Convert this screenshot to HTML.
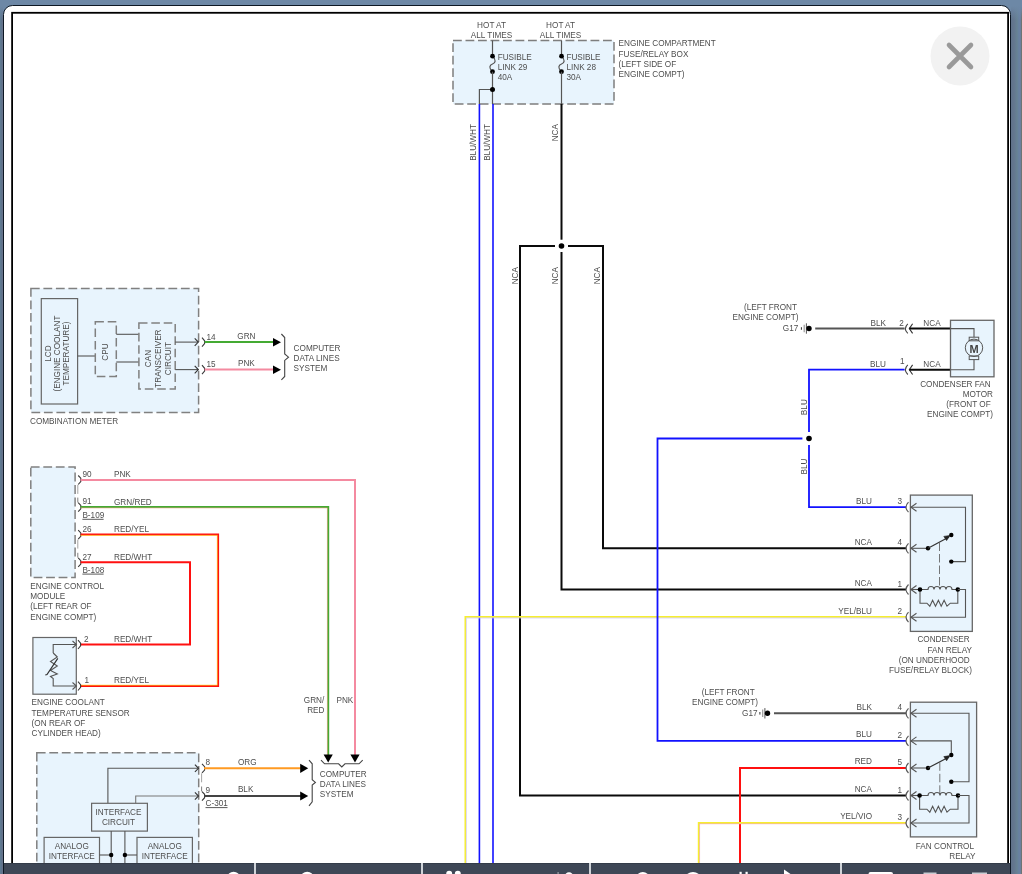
<!DOCTYPE html>
<html><head><meta charset="utf-8">
<style>
html,body{margin:0;padding:0;width:1022px;height:874px;overflow:hidden;background:#6a84a3;}
svg{position:absolute;left:0;top:0;will-change:transform;}
text{font-family:"Liberation Sans",sans-serif;white-space:pre;}
</style></head>
<body>
<svg width="1022" height="874" viewBox="0 0 1022 874">
<defs>
<linearGradient id="rs" x1="0" y1="0" x2="1" y2="0">
<stop offset="0" stop-color="#607189"/><stop offset="0.35" stop-color="#647890"/><stop offset="0.6" stop-color="#678293"/><stop offset="0.8" stop-color="#6781a3"/><stop offset="1" stop-color="#6f7f9c"/>
</linearGradient>
<linearGradient id="tf" x1="0" y1="0" x2="0" y2="1"><stop offset="0" stop-color="#6d88a6" stop-opacity="1"/><stop offset="0.3" stop-color="#6d88a6" stop-opacity="1"/><stop offset="1" stop-color="#6d88a6" stop-opacity="0"/></linearGradient>
</defs>
<rect x="0" y="0" width="1022" height="874" fill="#6d88a6"/>
<rect x="0" y="0" width="1" height="874" fill="#5f7a92"/>
<rect x="1" y="0" width="1" height="874" fill="#5e748d"/>
<rect x="2" y="0" width="1" height="874" fill="#66738b"/>
<rect x="1011" y="0" width="10" height="874" fill="url(#rs)"/>
<rect x="1021" y="0" width="1" height="874" fill="#6e7473"/>
<rect x="0" y="0" width="3" height="20" fill="url(#tf)"/>
<rect x="1011" y="0" width="11" height="20" fill="url(#tf)"/>
<rect x="3.5" y="5.5" width="1007" height="900" rx="9" fill="#ffffff" stroke="#0d1824" stroke-width="1"/>
<rect x="12.1" y="12.8" width="996" height="900" fill="none" stroke="#000" stroke-width="1.8"/>
<g>
<rect x="453" y="40.5" width="161" height="63.5" fill="#e8f4fd" stroke="#7e7e7e" stroke-width="1.5" stroke-dasharray="8.8,3.7"/>
<text x="491.50" y="28.12" text-anchor="middle" font-size="8.2" fill="#4e4e4e">HOT AT</text>
<text x="491.50" y="37.92" text-anchor="middle" font-size="8.2" fill="#4e4e4e">ALL TIMES</text>
<line x1="492.5" y1="40.5" x2="492.5" y2="56" stroke="#555555" stroke-width="1.2"/>
<path d="M492.5,56 C496.5,60 495.5,63 492.5,64 C489.5,65 488.5,68 492.5,71.7" fill="none" stroke="#555555" stroke-width="1.2"/>
<circle cx="492.5" cy="56.2" r="2.4" fill="#000"/>
<circle cx="492.5" cy="71.7" r="2.4" fill="#000"/>
<text x="497.70" y="59.72" text-anchor="start" font-size="8.2" fill="#4e4e4e">FUSIBLE</text>
<text x="497.70" y="70.02" text-anchor="start" font-size="8.2" fill="#4e4e4e">LINK 29</text>
<text x="497.70" y="80.22" text-anchor="start" font-size="8.2" fill="#4e4e4e">40A</text>
<text x="560.50" y="28.12" text-anchor="middle" font-size="8.2" fill="#4e4e4e">HOT AT</text>
<text x="560.50" y="37.92" text-anchor="middle" font-size="8.2" fill="#4e4e4e">ALL TIMES</text>
<line x1="561.5" y1="40.5" x2="561.5" y2="56" stroke="#555555" stroke-width="1.2"/>
<path d="M561.5,56 C565.5,60 564.5,63 561.5,64 C558.5,65 557.5,68 561.5,71.7" fill="none" stroke="#555555" stroke-width="1.2"/>
<circle cx="561.5" cy="56.2" r="2.4" fill="#000"/>
<circle cx="561.5" cy="71.7" r="2.4" fill="#000"/>
<text x="566.40" y="59.72" text-anchor="start" font-size="8.2" fill="#4e4e4e">FUSIBLE</text>
<text x="566.40" y="70.02" text-anchor="start" font-size="8.2" fill="#4e4e4e">LINK 28</text>
<text x="566.40" y="80.22" text-anchor="start" font-size="8.2" fill="#4e4e4e">30A</text>
<line x1="492.5" y1="71.7" x2="492.5" y2="104" stroke="#555555" stroke-width="1.2"/>
<polyline points="492.5,89.5 479.4,89.5 479.4,104" fill="none" stroke="#555555" stroke-width="1.2" stroke-linejoin="miter"/>
<circle cx="492.5" cy="89.5" r="2.5" fill="#000"/>
<line x1="561.5" y1="71.7" x2="561.5" y2="104" stroke="#555555" stroke-width="1.2"/>
<text x="618.60" y="45.62" text-anchor="start" font-size="8.2" fill="#4e4e4e">ENGINE COMPARTMENT</text>
<text x="618.60" y="56.82" text-anchor="start" font-size="8.2" fill="#4e4e4e">FUSE/RELAY BOX</text>
<text x="618.60" y="67.02" text-anchor="start" font-size="8.2" fill="#4e4e4e">(LEFT SIDE OF</text>
<text x="618.60" y="76.82" text-anchor="start" font-size="8.2" fill="#4e4e4e">ENGINE COMPT)</text>
<line x1="479.4" y1="104" x2="479.4" y2="863" stroke="#1212ff" stroke-width="1.6"/>
<line x1="493" y1="104" x2="493" y2="863" stroke="#1212ff" stroke-width="1.6"/>
<text transform="translate(476.20,124.00) rotate(-90)" text-anchor="end" font-size="8.2" fill="#4e4e4e">BLU/WHT</text>
<text transform="translate(490.00,124.00) rotate(-90)" text-anchor="end" font-size="8.2" fill="#4e4e4e">BLU/WHT</text>
<line x1="561.5" y1="104" x2="561.5" y2="239.7" stroke="#0a0a0a" stroke-width="2"/>
<text transform="translate(558.20,124.00) rotate(-90)" text-anchor="end" font-size="8.2" fill="#4e4e4e">NCA</text>
<line x1="520" y1="246" x2="555" y2="246" stroke="#0a0a0a" stroke-width="2"/>
<line x1="568" y1="246" x2="603" y2="246" stroke="#0a0a0a" stroke-width="2"/>
<circle cx="561.5" cy="246" r="2.8" fill="#000"/>
<polyline points="520,245 520,795.5 906,795.5" fill="none" stroke="#0a0a0a" stroke-width="2" stroke-linejoin="miter"/>
<polyline points="561.5,252 561.5,589.5 906,589.5" fill="none" stroke="#0a0a0a" stroke-width="2" stroke-linejoin="miter"/>
<polyline points="603,245 603,548.3 906,548.3" fill="none" stroke="#0a0a0a" stroke-width="2" stroke-linejoin="miter"/>
<text transform="translate(518.40,267.00) rotate(-90)" text-anchor="end" font-size="8.2" fill="#4e4e4e">NCA</text>
<text transform="translate(558.20,267.00) rotate(-90)" text-anchor="end" font-size="8.2" fill="#4e4e4e">NCA</text>
<text transform="translate(600.00,267.00) rotate(-90)" text-anchor="end" font-size="8.2" fill="#4e4e4e">NCA</text>
<polyline points="465.3,863 465.3,616.9 906,616.9" fill="none" stroke="#f6ee30" stroke-width="1.6" stroke-linejoin="miter"/>
<polyline points="466.4,863 466.4,618.0 906,618.0" fill="none" stroke="#cdc6f6" stroke-width="0.7" stroke-linejoin="miter"/>
<polyline points="802.4,438.5 657.5,438.5 657.5,740.9 906,740.9" fill="none" stroke="#1212ff" stroke-width="1.8" stroke-linejoin="miter"/>
<polyline points="904.6,369.7 809,369.7 809,432" fill="none" stroke="#1212ff" stroke-width="1.8" stroke-linejoin="miter"/>
<polyline points="809,445 809,507.2 906,507.2" fill="none" stroke="#1212ff" stroke-width="1.8" stroke-linejoin="miter"/>
<circle cx="809" cy="438.5" r="2.8" fill="#000"/>
<text transform="translate(807.00,399.20) rotate(-90)" text-anchor="end" font-size="8.2" fill="#4e4e4e">BLU</text>
<text transform="translate(807.00,458.50) rotate(-90)" text-anchor="end" font-size="8.2" fill="#4e4e4e">BLU</text>
<polyline points="740,863 740,768 906,768" fill="none" stroke="#ff1010" stroke-width="2" stroke-linejoin="miter"/>
<polyline points="698.8,863 698.8,823 906,823" fill="none" stroke="#f6ee30" stroke-width="2" stroke-linejoin="miter"/>
<polyline points="699.6,863 699.6,823.8 906,823.8" fill="none" stroke="#f0a0d0" stroke-width="0.6" stroke-linejoin="miter"/>
<text x="797.00" y="310.12" text-anchor="end" font-size="8.2" fill="#4e4e4e">(LEFT FRONT</text>
<text x="798.40" y="320.02" text-anchor="end" font-size="8.2" fill="#4e4e4e">ENGINE COMPT)</text>
<text x="798.30" y="331.12" text-anchor="end" font-size="8.2" fill="#4e4e4e">G17</text>
<line x1="801.4" y1="327.2" x2="801.4" y2="329.8" stroke="#333" stroke-width="1"/>
<line x1="804.2" y1="324.7" x2="804.2" y2="332.3" stroke="#9a9a9a" stroke-width="1.2"/>
<line x1="806.4" y1="323.3" x2="806.4" y2="333.7" stroke="#555" stroke-width="1"/>
<circle cx="809" cy="328.5" r="2.7" fill="#000"/>
<line x1="815.2" y1="328.6" x2="904.6" y2="328.6" stroke="#555" stroke-width="2"/>
<text x="886.00" y="326.02" text-anchor="end" font-size="8.2" fill="#4e4e4e">BLK</text>
<text x="901.60" y="325.62" text-anchor="middle" font-size="8.2" fill="#4e4e4e">2</text>
<text x="902.30" y="364.12" text-anchor="middle" font-size="8.2" fill="#4e4e4e">1</text>
<text x="886.00" y="367.02" text-anchor="end" font-size="8.2" fill="#4e4e4e">BLU</text>
<path d="M907.8,323.8 Q903.0,328.6 907.8,333.40000000000003" fill="none" stroke="#444" stroke-width="1.1"/>
<polyline points="912.6,323.8 909.3,328.6 912.6,333.40000000000003" fill="none" stroke="#333" stroke-width="1.1" stroke-linejoin="miter"/>
<path d="M907.8,364.9 Q903.0,369.7 907.8,374.5" fill="none" stroke="#444" stroke-width="1.1"/>
<polyline points="912.6,364.9 909.3,369.7 912.6,374.5" fill="none" stroke="#333" stroke-width="1.1" stroke-linejoin="miter"/>
<line x1="909.5" y1="328.6" x2="950.5" y2="328.6" stroke="#0a0a0a" stroke-width="2"/>
<line x1="909.5" y1="369.7" x2="950.5" y2="369.7" stroke="#0a0a0a" stroke-width="2"/>
<text x="932.00" y="326.02" text-anchor="middle" font-size="8.2" fill="#4e4e4e">NCA</text>
<text x="932.00" y="367.02" text-anchor="middle" font-size="8.2" fill="#4e4e4e">NCA</text>
<rect x="950.5" y="320.3" width="43.5" height="56.5" fill="#e8f4fd" stroke="#666" stroke-width="1.3"/>
<polyline points="950.5,328.6 974,328.6 974,337.2" fill="none" stroke="#555555" stroke-width="1.1" stroke-linejoin="miter"/>
<polyline points="950.5,369.7 974,369.7 974,359.6" fill="none" stroke="#555555" stroke-width="1.1" stroke-linejoin="miter"/>
<rect x="969.2" y="337.2" width="9.5" height="3.6" fill="#e8f4fd" stroke="#555555" stroke-width="1"/>
<rect x="969.2" y="356.0" width="9.5" height="3.6" fill="#e8f4fd" stroke="#555555" stroke-width="1"/>
<circle cx="974" cy="347.8" r="8.7" fill="none" stroke="#555555" stroke-width="1"/>
<text x="974.00" y="352.88" text-anchor="middle" font-size="11" fill="#444" font-weight="bold">M</text>
<text x="993.00" y="387.12" text-anchor="end" font-size="8.2" fill="#4e4e4e">CONDENSER FAN </text>
<text x="993.00" y="397.22" text-anchor="end" font-size="8.2" fill="#4e4e4e">MOTOR</text>
<text x="993.00" y="407.32" text-anchor="end" font-size="8.2" fill="#4e4e4e">(FRONT OF </text>
<text x="993.00" y="417.42" text-anchor="end" font-size="8.2" fill="#4e4e4e">ENGINE COMPT)</text>
<rect x="910.4" y="495.1" width="61.9" height="136.3" fill="#e8f4fd" stroke="#666" stroke-width="1.3"/>
<path d="M908.5,502.2 Q903.5,507.2 908.5,512.2" fill="none" stroke="#5a5a5a" stroke-width="1.2"/>
<polyline points="916.5,503.2 910.9,507.2 916.5,511.2" fill="none" stroke="#555555" stroke-width="1.1" stroke-linejoin="miter"/>
<text x="899.70" y="504.22" text-anchor="middle" font-size="8.2" fill="#4e4e4e">3</text>
<text x="872.00" y="503.52" text-anchor="end" font-size="8.2" fill="#4e4e4e">BLU</text>
<path d="M908.5,543.3 Q903.5,548.3 908.5,553.3" fill="none" stroke="#5a5a5a" stroke-width="1.2"/>
<polyline points="916.5,544.3 910.9,548.3 916.5,552.3" fill="none" stroke="#555555" stroke-width="1.1" stroke-linejoin="miter"/>
<text x="899.70" y="545.32" text-anchor="middle" font-size="8.2" fill="#4e4e4e">4</text>
<text x="872.00" y="544.62" text-anchor="end" font-size="8.2" fill="#4e4e4e">NCA</text>
<path d="M908.5,584.5 Q903.5,589.5 908.5,594.5" fill="none" stroke="#5a5a5a" stroke-width="1.2"/>
<polyline points="916.5,585.5 910.9,589.5 916.5,593.5" fill="none" stroke="#555555" stroke-width="1.1" stroke-linejoin="miter"/>
<text x="899.70" y="586.52" text-anchor="middle" font-size="8.2" fill="#4e4e4e">1</text>
<text x="872.00" y="585.82" text-anchor="end" font-size="8.2" fill="#4e4e4e">NCA</text>
<path d="M908.5,612.2 Q903.5,617.2 908.5,622.2" fill="none" stroke="#5a5a5a" stroke-width="1.2"/>
<polyline points="916.5,613.2 910.9,617.2 916.5,621.2" fill="none" stroke="#555555" stroke-width="1.1" stroke-linejoin="miter"/>
<text x="899.70" y="614.22" text-anchor="middle" font-size="8.2" fill="#4e4e4e">2</text>
<text x="872.00" y="613.52" text-anchor="end" font-size="8.2" fill="#4e4e4e">YEL/BLU</text>
<polyline points="911,507.2 965.5,507.2 965.5,561.6 951.3,561.6" fill="none" stroke="#555555" stroke-width="1.1" stroke-linejoin="miter"/>
<circle cx="951.3" cy="561.6" r="2.2" fill="#000"/>
<line x1="911" y1="548.3" x2="928" y2="548.3" stroke="#555555" stroke-width="1.1"/>
<circle cx="928" cy="548.3" r="2.2" fill="#000"/>
<line x1="928" y1="548.3" x2="949" y2="537" stroke="#333" stroke-width="1.2"/>
<path d="M943.8,536.4 L950,535.4 L946.6,540.6 Z" fill="#222" stroke="#222" stroke-width="0.6"/>
<circle cx="951.3" cy="535" r="2.2" fill="#000"/>
<line x1="939.5" y1="542.5" x2="939.5" y2="589" stroke="#555555" stroke-width="0.8" stroke-dasharray="8.5,3"/>
<line x1="911" y1="589.5" x2="920" y2="589.5" stroke="#555555" stroke-width="1.1"/>
<path d="M920,589.5 L928,589.5 a3,3 0 0 1 6,0 a3,3 0 0 1 6,0 a3,3 0 0 1 6,0 a3,3 0 0 1 6,0 L957.8,589.5" fill="none" stroke="#555555" stroke-width="1.1"/>
<polyline points="920,589.5 920,603.2 926.9,603.2 929.8,606.2 932.6,600.2 935.5,606.2 938.4,600.2 941.2,606.2 944.1,600.2 947.0,606.2 950.3,603.2 957.8,603.2 957.8,589.5" fill="none" stroke="#555555" stroke-width="1.1" stroke-linejoin="miter"/>
<circle cx="920" cy="589.5" r="2.3" fill="#000"/>
<circle cx="957.8" cy="589.5" r="2.3" fill="#000"/>
<polyline points="957.8,589.5 965.5,589.5 965.5,617.2 911,617.2" fill="none" stroke="#555555" stroke-width="1.1" stroke-linejoin="miter"/>
<text x="972.00" y="642.32" text-anchor="end" font-size="8.2" fill="#4e4e4e">CONDENSER </text>
<text x="972.00" y="652.62" text-anchor="end" font-size="8.2" fill="#4e4e4e">FAN RELAY</text>
<text x="972.00" y="662.92" text-anchor="end" font-size="8.2" fill="#4e4e4e">(ON UNDERHOOD </text>
<text x="972.00" y="673.22" text-anchor="end" font-size="8.2" fill="#4e4e4e">FUSE/RELAY BLOCK)</text>
<text x="754.80" y="695.12" text-anchor="end" font-size="8.2" fill="#4e4e4e">(LEFT FRONT</text>
<text x="758.00" y="705.02" text-anchor="end" font-size="8.2" fill="#4e4e4e">ENGINE COMPT)</text>
<text x="757.50" y="716.12" text-anchor="end" font-size="8.2" fill="#4e4e4e">G17</text>
<line x1="759.9" y1="712.0" x2="759.9" y2="714.5999999999999" stroke="#333" stroke-width="1"/>
<line x1="762.7" y1="709.5" x2="762.7" y2="717.0999999999999" stroke="#9a9a9a" stroke-width="1.2"/>
<line x1="764.9" y1="708.0999999999999" x2="764.9" y2="718.5" stroke="#555" stroke-width="1"/>
<circle cx="767.5" cy="713.3" r="2.7" fill="#000"/>
<line x1="774" y1="713.3" x2="906" y2="713.3" stroke="#555" stroke-width="2"/>
<rect x="910.4" y="702.2" width="66.2" height="134.7" fill="#e8f4fd" stroke="#666" stroke-width="1.3"/>
<path d="M908.5,708.3 Q903.5,713.3 908.5,718.3" fill="none" stroke="#5a5a5a" stroke-width="1.2"/>
<polyline points="916.5,709.3 910.9,713.3 916.5,717.3" fill="none" stroke="#555555" stroke-width="1.1" stroke-linejoin="miter"/>
<text x="899.70" y="710.32" text-anchor="middle" font-size="8.2" fill="#4e4e4e">4</text>
<text x="872.00" y="709.62" text-anchor="end" font-size="8.2" fill="#4e4e4e">BLK</text>
<path d="M908.5,735.9 Q903.5,740.9 908.5,745.9" fill="none" stroke="#5a5a5a" stroke-width="1.2"/>
<polyline points="916.5,736.9 910.9,740.9 916.5,744.9" fill="none" stroke="#555555" stroke-width="1.1" stroke-linejoin="miter"/>
<text x="899.70" y="737.92" text-anchor="middle" font-size="8.2" fill="#4e4e4e">2</text>
<text x="872.00" y="737.22" text-anchor="end" font-size="8.2" fill="#4e4e4e">BLU</text>
<path d="M908.5,763 Q903.5,768 908.5,773" fill="none" stroke="#5a5a5a" stroke-width="1.2"/>
<polyline points="916.5,764 910.9,768 916.5,772" fill="none" stroke="#555555" stroke-width="1.1" stroke-linejoin="miter"/>
<text x="899.70" y="765.02" text-anchor="middle" font-size="8.2" fill="#4e4e4e">5</text>
<text x="872.00" y="764.32" text-anchor="end" font-size="8.2" fill="#4e4e4e">RED</text>
<path d="M908.5,790.5 Q903.5,795.5 908.5,800.5" fill="none" stroke="#5a5a5a" stroke-width="1.2"/>
<polyline points="916.5,791.5 910.9,795.5 916.5,799.5" fill="none" stroke="#555555" stroke-width="1.1" stroke-linejoin="miter"/>
<text x="899.70" y="792.52" text-anchor="middle" font-size="8.2" fill="#4e4e4e">1</text>
<text x="872.00" y="791.82" text-anchor="end" font-size="8.2" fill="#4e4e4e">NCA</text>
<path d="M908.5,818 Q903.5,823 908.5,828" fill="none" stroke="#5a5a5a" stroke-width="1.2"/>
<polyline points="916.5,819 910.9,823 916.5,827" fill="none" stroke="#555555" stroke-width="1.1" stroke-linejoin="miter"/>
<text x="899.70" y="820.02" text-anchor="middle" font-size="8.2" fill="#4e4e4e">3</text>
<text x="872.00" y="819.32" text-anchor="end" font-size="8.2" fill="#4e4e4e">YEL/VIO</text>
<polyline points="911,713.3 969,713.3 969,781.8 951.3,781.8" fill="none" stroke="#555555" stroke-width="1.1" stroke-linejoin="miter"/>
<circle cx="951.3" cy="781.8" r="2.2" fill="#000"/>
<polyline points="911,740.9 951.3,740.9 951.3,755" fill="none" stroke="#555555" stroke-width="1.1" stroke-linejoin="miter"/>
<circle cx="951.3" cy="755" r="2.2" fill="#000"/>
<line x1="911" y1="768" x2="928" y2="768" stroke="#555555" stroke-width="1.1"/>
<circle cx="928" cy="768" r="2.2" fill="#000"/>
<line x1="928" y1="768" x2="949" y2="757" stroke="#333" stroke-width="1.2"/>
<path d="M943.8,756.6 L950,755.6 L946.6,760.8 Z" fill="#222" stroke="#222" stroke-width="0.6"/>
<line x1="939.8" y1="762.3" x2="939.8" y2="795" stroke="#555555" stroke-width="0.8" stroke-dasharray="8.5,3"/>
<line x1="911" y1="795.5" x2="920" y2="795.5" stroke="#555555" stroke-width="1.1"/>
<path d="M919.6,795.5 L928,795.5 a3,3 0 0 1 6,0 a3,3 0 0 1 6,0 a3,3 0 0 1 6,0 a3,3 0 0 1 6,0 L958,795.5" fill="none" stroke="#555555" stroke-width="1.1"/>
<polyline points="919.6,795.5 919.6,809.2 926.9,809.2 929.8,812.2 932.6,806.2 935.5,812.2 938.4,806.2 941.2,812.2 944.1,806.2 947.0,812.2 950.3,809.2 958,809.2 958,795.5" fill="none" stroke="#555555" stroke-width="1.1" stroke-linejoin="miter"/>
<circle cx="919.6" cy="795.5" r="2.3" fill="#000"/>
<circle cx="958" cy="795.5" r="2.3" fill="#000"/>
<polyline points="958,795.5 969,795.5 969,823 911,823" fill="none" stroke="#555555" stroke-width="1.1" stroke-linejoin="miter"/>
<text x="974.00" y="848.82" text-anchor="end" font-size="8.2" fill="#4e4e4e">FAN CONTROL</text>
<text x="975.50" y="859.12" text-anchor="end" font-size="8.2" fill="#4e4e4e">RELAY</text>
<rect x="30.9" y="288.5" width="167.7" height="123.9" fill="#e8f4fd" stroke="#808080" stroke-width="1.5" stroke-dasharray="8.8,3.7"/>
<rect x="41.3" y="298.6" width="36.3" height="105.4" fill="#e8f4fd" stroke="#666" stroke-width="1.2"/>
<text transform="translate(50.50,353.60) rotate(-90)" text-anchor="middle" font-size="8.2" fill="#4e4e4e">LCD</text>
<text transform="translate(59.70,353.60) rotate(-90)" text-anchor="middle" font-size="8.2" fill="#4e4e4e">(ENGINE COOLANT</text>
<text transform="translate(69.00,353.60) rotate(-90)" text-anchor="middle" font-size="8.2" fill="#4e4e4e">TEMPERATURE)</text>
<line x1="77.6" y1="356" x2="95.3" y2="356" stroke="#555555" stroke-width="1.1"/>
<rect x="95.3" y="321.7" width="21" height="54.9" fill="#e8f4fd" stroke="#808080" stroke-width="1.5" stroke-dasharray="8.6,3.8"/>
<text transform="translate(107.60,352.00) rotate(-90)" text-anchor="middle" font-size="8.2" fill="#4e4e4e">CPU</text>
<polyline points="116.3,334.3 138.9,334.3" fill="none" stroke="#555555" stroke-width="1.1" stroke-linejoin="miter"/>
<polyline points="116.3,362 138.9,362" fill="none" stroke="#555555" stroke-width="1.1" stroke-linejoin="miter"/>
<rect x="138.9" y="323" width="36.3" height="65.9" fill="#e8f4fd" stroke="#808080" stroke-width="1.5" stroke-dasharray="8.6,3.8"/>
<text transform="translate(150.60,358.60) rotate(-90)" text-anchor="middle" font-size="8.2" fill="#4e4e4e">CAN</text>
<text transform="translate(161.00,358.60) rotate(-90)" text-anchor="middle" font-size="8.2" fill="#4e4e4e">TRANSCEIVER</text>
<text transform="translate(170.80,358.60) rotate(-90)" text-anchor="middle" font-size="8.2" fill="#4e4e4e">CIRCUIT</text>
<text x="30.00" y="424.02" text-anchor="start" font-size="8.2" fill="#4e4e4e">COMBINATION METER</text>
<line x1="175.2" y1="342.1" x2="198.3" y2="342.1" stroke="#555555" stroke-width="1.1"/>
<polyline points="194.70000000000002,338.3 198.3,342.1 194.70000000000002,345.90000000000003" fill="none" stroke="#333" stroke-width="1.1" stroke-linejoin="miter"/>
<line x1="175.2" y1="369.6" x2="198.3" y2="369.6" stroke="#555555" stroke-width="1.1"/>
<polyline points="194.70000000000002,365.8 198.3,369.6 194.70000000000002,373.40000000000003" fill="none" stroke="#333" stroke-width="1.1" stroke-linejoin="miter"/>
<polyline points="202,337.70000000000005 204.6,340.8 204.6,343.5 202,346.6" fill="none" stroke="#3a3a3a" stroke-width="1.1" stroke-linejoin="miter"/>
<polyline points="202,365.20000000000005 204.6,368.3 204.6,371.0 202,374.1" fill="none" stroke="#3a3a3a" stroke-width="1.1" stroke-linejoin="miter"/>
<line x1="204.6" y1="342.1" x2="273.5" y2="342.1" stroke="#44aa33" stroke-width="2"/>
<line x1="204.6" y1="369.6" x2="273.5" y2="369.6" stroke="#f48aa0" stroke-width="2"/>
<path d="M273,337.9 L281,342.2 L273,346.5 Z" fill="#000"/>
<path d="M273,365.5 L281,369.8 L273,374.1 Z" fill="#000"/>
<text x="206.40" y="339.82" text-anchor="start" font-size="8.2" fill="#4e4e4e">14</text>
<text x="206.40" y="367.02" text-anchor="start" font-size="8.2" fill="#4e4e4e">15</text>
<text x="246.40" y="339.02" text-anchor="middle" font-size="8.2" fill="#4e4e4e">GRN</text>
<text x="246.40" y="366.22" text-anchor="middle" font-size="8.2" fill="#4e4e4e">PNK</text>
<polyline points="281.4,334 284.7,337.5 284.7,354 288.5,357.2 284.7,360.4 284.7,376.5 281.4,379.8" fill="none" stroke="#444" stroke-width="1.1" stroke-linejoin="miter"/>
<text x="293.60" y="350.72" text-anchor="start" font-size="8.2" fill="#4e4e4e">COMPUTER</text>
<text x="293.60" y="360.82" text-anchor="start" font-size="8.2" fill="#4e4e4e">DATA LINES</text>
<text x="293.60" y="370.92" text-anchor="start" font-size="8.2" fill="#4e4e4e">SYSTEM</text>
<rect x="30.8" y="466.9" width="44.3" height="110.5" fill="#e8f4fd" stroke="#808080" stroke-width="1.5" stroke-dasharray="8.8,3.7"/>
<polyline points="78.2,475.5 80.8,478.2 80.8,481.59999999999997 78.2,484.5" fill="none" stroke="#3a3a3a" stroke-width="1.1" stroke-linejoin="miter"/>
<polyline points="78.2,502.70000000000005 80.8,505.40000000000003 80.8,508.8 78.2,511.70000000000005" fill="none" stroke="#3a3a3a" stroke-width="1.1" stroke-linejoin="miter"/>
<line x1="77.8" y1="484.9" x2="77.8" y2="493.9" stroke="#9a9a9a" stroke-width="0.9"/>
<line x1="77.8" y1="497.6" x2="77.8" y2="502.5" stroke="#707070" stroke-width="0.9"/>
<polyline points="78.2,530.2 80.8,532.9 80.8,536.3000000000001 78.2,539.2" fill="none" stroke="#3a3a3a" stroke-width="1.1" stroke-linejoin="miter"/>
<polyline points="78.2,557.9 80.8,560.5999999999999 80.8,564.0 78.2,566.9" fill="none" stroke="#3a3a3a" stroke-width="1.1" stroke-linejoin="miter"/>
<line x1="77.8" y1="539.6" x2="77.8" y2="548.6" stroke="#9a9a9a" stroke-width="0.9"/>
<line x1="77.8" y1="552.8" x2="77.8" y2="557.6999999999999" stroke="#707070" stroke-width="0.9"/>
<polyline points="80.6,479.9 355,479.9 355,757" fill="none" stroke="#f48aa0" stroke-width="2" stroke-linejoin="miter"/>
<polyline points="80.6,507.1 328.2,507.1 328.2,757" fill="none" stroke="#44aa33" stroke-width="2" stroke-linejoin="miter"/>
<polyline points="80.6,507.9 327.4,507.9 327.4,757" fill="none" stroke="#e8a080" stroke-width="0.6" stroke-linejoin="miter"/>
<polyline points="80.6,534.6 218.1,534.6 218.1,686 80.6,686" fill="none" stroke="#ff1010" stroke-width="2" stroke-linejoin="miter"/>
<polyline points="80.6,535.4 217.3,535.4 217.3,685.2 80.6,685.2" fill="none" stroke="#ffd020" stroke-width="0.7" stroke-linejoin="miter"/>
<polyline points="80.6,562.3 190,562.3 190,644.5 80.6,644.5" fill="none" stroke="#ff1010" stroke-width="2" stroke-linejoin="miter"/>
<text x="82.40" y="477.22" text-anchor="start" font-size="8.2" fill="#4e4e4e">90</text>
<text x="114.00" y="477.42" text-anchor="start" font-size="8.2" fill="#4e4e4e">PNK</text>
<text x="82.40" y="504.42" text-anchor="start" font-size="8.2" fill="#4e4e4e">91</text>
<text x="114.00" y="504.62" text-anchor="start" font-size="8.2" fill="#4e4e4e">GRN/RED</text>
<text x="82.40" y="531.92" text-anchor="start" font-size="8.2" fill="#4e4e4e">26</text>
<text x="114.00" y="532.12" text-anchor="start" font-size="8.2" fill="#4e4e4e">RED/YEL</text>
<text x="82.40" y="559.62" text-anchor="start" font-size="8.2" fill="#4e4e4e">27</text>
<text x="114.00" y="559.82" text-anchor="start" font-size="8.2" fill="#4e4e4e">RED/WHT</text>
<text x="82.40" y="517.82" text-anchor="start" font-size="8.2" fill="#4e4e4e">B-109</text>
<line x1="82.4" y1="519.3" x2="103.6" y2="519.3" stroke="#5a5a5a" stroke-width="1"/>
<text x="82.40" y="572.62" text-anchor="start" font-size="8.2" fill="#4e4e4e">B-108</text>
<line x1="82.4" y1="574.0999999999999" x2="103.6" y2="574.0999999999999" stroke="#5a5a5a" stroke-width="1"/>
<text x="30.30" y="589.02" text-anchor="start" font-size="8.2" fill="#4e4e4e">ENGINE CONTROL</text>
<text x="30.30" y="598.82" text-anchor="start" font-size="8.2" fill="#4e4e4e">MODULE</text>
<text x="30.30" y="609.02" text-anchor="start" font-size="8.2" fill="#4e4e4e">(LEFT REAR OF</text>
<text x="30.30" y="619.62" text-anchor="start" font-size="8.2" fill="#4e4e4e">ENGINE COMPT)</text>
<rect x="32.9" y="637.5" width="43.4" height="56.7" fill="#e8f4fd" stroke="#666" stroke-width="1.2"/>
<polyline points="78,640.1 80.6,643.2 80.6,645.9 78,649.0" fill="none" stroke="#3a3a3a" stroke-width="1.1" stroke-linejoin="miter"/>
<polyline points="78,681.6 80.6,684.7 80.6,687.4 78,690.5" fill="none" stroke="#3a3a3a" stroke-width="1.1" stroke-linejoin="miter"/>
<text x="84.00" y="642.32" text-anchor="start" font-size="8.2" fill="#4e4e4e">2</text>
<text x="84.60" y="683.22" text-anchor="start" font-size="8.2" fill="#4e4e4e">1</text>
<text x="114.00" y="642.12" text-anchor="start" font-size="8.2" fill="#4e4e4e">RED/WHT</text>
<text x="114.00" y="683.42" text-anchor="start" font-size="8.2" fill="#4e4e4e">RED/YEL</text>
<polyline points="76,644.5 53.2,644.5 53.2,653" fill="none" stroke="#555555" stroke-width="1.1" stroke-linejoin="miter"/>
<polyline points="72.5,641 76.4,644.5 72.5,648" fill="none" stroke="#555555" stroke-width="1.1" stroke-linejoin="miter"/>
<polyline points="53.2,653 57.3,657 50.5,661.5 57.3,666 50.5,670.5 57.3,674 50.5,676.5 53.2,678.5 53.2,686 76,686" fill="none" stroke="#555555" stroke-width="1.1" stroke-linejoin="miter"/>
<polyline points="72.5,682.5 76.4,686 72.5,689.5" fill="none" stroke="#555555" stroke-width="1.1" stroke-linejoin="miter"/>
<polyline points="45.3,675 47,674.5 57.8,658.4" fill="none" stroke="#333" stroke-width="1.2" stroke-linejoin="miter"/>
<text x="31.60" y="705.02" text-anchor="start" font-size="8.2" fill="#4e4e4e">ENGINE COOLANT</text>
<text x="31.60" y="715.82" text-anchor="start" font-size="8.2" fill="#4e4e4e">TEMPERATURE SENSOR</text>
<text x="31.60" y="725.82" text-anchor="start" font-size="8.2" fill="#4e4e4e">(ON REAR OF</text>
<text x="31.60" y="735.82" text-anchor="start" font-size="8.2" fill="#4e4e4e">CYLINDER HEAD)</text>
<path d="M323.6,754.6 L332.8,754.6 L328.2,762.6 Z" fill="#000"/>
<path d="M350.4,754.6 L359.6,754.6 L355,762.6 Z" fill="#000"/>
<text x="324.30" y="703.12" text-anchor="end" font-size="8.2" fill="#4e4e4e">GRN/</text>
<text x="324.50" y="713.12" text-anchor="end" font-size="8.2" fill="#4e4e4e">RED</text>
<text x="336.50" y="703.12" text-anchor="start" font-size="8.2" fill="#4e4e4e">PNK</text>
<polyline points="321,760.2 324.6,763.8 338.6,763.8 341.8,767 345,763.8 359,763.8 362.7,760.2" fill="none" stroke="#444" stroke-width="1.1" stroke-linejoin="miter"/>
<rect x="36.8" y="752.8" width="161.9" height="130" fill="#e8f4fd" stroke="#808080" stroke-width="1.5" stroke-dasharray="8.8,3.7"/>
<polyline points="107.9,803.3 107.9,768.3 198.5,768.3" fill="none" stroke="#555555" stroke-width="1.1" stroke-linejoin="miter"/>
<polyline points="194.9,764.7 198.5,768.3 194.9,771.9" fill="none" stroke="#333" stroke-width="1.1" stroke-linejoin="miter"/>
<polyline points="135.7,803.3 135.7,796 198.5,796" fill="none" stroke="#777" stroke-width="1.1" stroke-linejoin="miter"/>
<polyline points="194.9,792.4 198.5,796 194.9,799.6" fill="none" stroke="#333" stroke-width="1.1" stroke-linejoin="miter"/>
<rect x="91.6" y="803.3" width="55.8" height="27.8" fill="#e8f4fd" stroke="#666" stroke-width="1.2"/>
<text x="118.50" y="815.32" text-anchor="middle" font-size="8.2" fill="#4e4e4e">INTERFACE</text>
<text x="118.50" y="824.82" text-anchor="middle" font-size="8.2" fill="#4e4e4e">CIRCUIT</text>
<rect x="44.1" y="837.4" width="55.4" height="40" fill="#e8f4fd" stroke="#666" stroke-width="1.2"/>
<rect x="137" y="837.4" width="55.4" height="40" fill="#e8f4fd" stroke="#666" stroke-width="1.2"/>
<text x="71.80" y="848.62" text-anchor="middle" font-size="8.2" fill="#4e4e4e">ANALOG</text>
<text x="71.80" y="859.22" text-anchor="middle" font-size="8.2" fill="#4e4e4e">INTERFACE</text>
<text x="164.70" y="848.62" text-anchor="middle" font-size="8.2" fill="#4e4e4e">ANALOG</text>
<text x="164.70" y="859.22" text-anchor="middle" font-size="8.2" fill="#4e4e4e">INTERFACE</text>
<line x1="111.2" y1="831.1" x2="111.2" y2="863" stroke="#555555" stroke-width="1.1"/>
<line x1="124.9" y1="831.1" x2="124.9" y2="863" stroke="#555555" stroke-width="1.1"/>
<line x1="99.5" y1="855" x2="111.2" y2="855" stroke="#555555" stroke-width="1.1"/>
<line x1="124.9" y1="855" x2="137" y2="855" stroke="#555555" stroke-width="1.1"/>
<circle cx="111.2" cy="855" r="2.2" fill="#000"/>
<circle cx="124.9" cy="855" r="2.2" fill="#000"/>
<polyline points="202,763.9 204.6,766.5999999999999 204.6,770.0 202,772.9" fill="none" stroke="#3a3a3a" stroke-width="1.1" stroke-linejoin="miter"/>
<polyline points="202,791.6 204.6,794.3 204.6,797.7 202,800.6" fill="none" stroke="#3a3a3a" stroke-width="1.1" stroke-linejoin="miter"/>
<line x1="201.6" y1="773.3" x2="201.6" y2="782.3" stroke="#9a9a9a" stroke-width="0.9"/>
<line x1="201.6" y1="786.5" x2="201.6" y2="791.4" stroke="#707070" stroke-width="0.9"/>
<line x1="204" y1="768.3" x2="301" y2="768.3" stroke="#ff9a22" stroke-width="2"/>
<line x1="204" y1="796" x2="301" y2="796" stroke="#444" stroke-width="2"/>
<path d="M300.2,763.7 L308.2,768.3 L300.2,772.9 Z" fill="#000"/>
<path d="M300.2,791.4 L308.2,796 L300.2,800.6 Z" fill="#000"/>
<text x="205.50" y="765.02" text-anchor="start" font-size="8.2" fill="#4e4e4e">8</text>
<text x="205.50" y="792.82" text-anchor="start" font-size="8.2" fill="#4e4e4e">9</text>
<text x="237.90" y="764.72" text-anchor="start" font-size="8.2" fill="#4e4e4e">ORG</text>
<text x="237.90" y="792.02" text-anchor="start" font-size="8.2" fill="#4e4e4e">BLK</text>
<text x="205.50" y="805.92" text-anchor="start" font-size="8.2" fill="#4e4e4e">C-301</text>
<line x1="205.5" y1="807.6" x2="227.5" y2="807.6" stroke="#5a5a5a" stroke-width="1"/>
<polyline points="309,760.2 312.2,763.8 312.2,779.8 315.4,782.4 312.2,785 312.2,801.8 309,805.8" fill="none" stroke="#444" stroke-width="1.1" stroke-linejoin="miter"/>
<text x="319.80" y="777.02" text-anchor="start" font-size="8.2" fill="#4e4e4e">COMPUTER</text>
<text x="319.80" y="786.97" text-anchor="start" font-size="8.2" fill="#4e4e4e">DATA LINES</text>
<text x="319.80" y="796.92" text-anchor="start" font-size="8.2" fill="#4e4e4e">SYSTEM</text>
</g>
<circle cx="960" cy="56" r="29.5" fill="#f2f2f2"/>
<path d="M949,45 L971,67 M971,45 L949,67" stroke="#9a9a9a" stroke-width="4.6" stroke-linecap="round"/>
<rect x="4" y="863" width="1006" height="11" fill="#3e4756"/>
<rect x="4" y="863" width="1006" height="1" fill="#343c49"/>
<rect x="254" y="863" width="2" height="11" fill="#cfd3d8"/>
<rect x="421" y="863" width="2" height="11" fill="#cfd3d8"/>
<rect x="589" y="863" width="2" height="11" fill="#cfd3d8"/>
<rect x="840" y="863" width="2" height="11" fill="#cfd3d8"/>
<g fill="#ffffff">
<ellipse cx="233.6" cy="878" rx="6.5" ry="6.2"/>
<ellipse cx="307.2" cy="878" rx="6.6" ry="6.2"/>
<ellipse cx="449.2" cy="874" rx="3" ry="3.3"/>
<ellipse cx="457.8" cy="874" rx="3" ry="3.3"/>
<ellipse cx="569" cy="876.5" rx="4.2" ry="4.2"/>
<rect x="557.5" y="872" width="1.2" height="2" fill="#9aa0a8"/>
<ellipse cx="642.8" cy="878" rx="6.5" ry="6"/>
<ellipse cx="693" cy="878" rx="7.5" ry="6"/>
<rect x="739.5" y="871.8" width="2.2" height="3"/>
<rect x="745.5" y="871.8" width="2.2" height="3"/>
<path d="M784,869.5 L790.5,874 L784,874 Z"/>
<rect x="868.5" y="872" width="24.5" height="4" rx="2"/>
<rect x="923.5" y="872.5" width="13" height="3" fill="#c8ccd2"/>
<rect x="972" y="872.5" width="15" height="3" fill="#c8ccd2"/>
</g>
</svg>
</body></html>
